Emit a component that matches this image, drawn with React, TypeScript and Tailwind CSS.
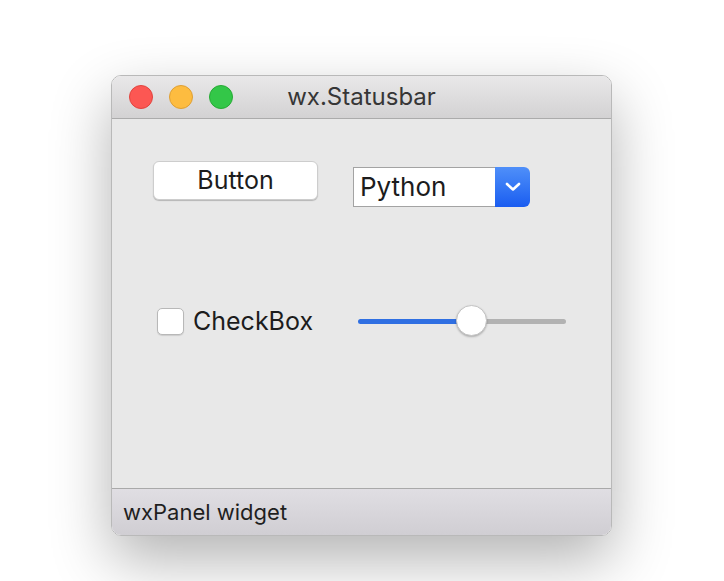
import { type ReactElement } from 'react'

function TrafficLights (): ReactElement {
  return (
    <div className="flex w-[121px] items-center gap-[16px] pl-[17px]">
      <span className="h-[24px] w-[24px] rounded-full border border-[#e0443e] bg-[#fc5753]" />
      <span className="h-[24px] w-[24px] rounded-full border border-[#de9f34] bg-[#fdbc40]" />
      <span className="h-[24px] w-[24px] rounded-full border border-[#27aa35] bg-[#33c748]" />
    </div>
  )
}

function Choice (): ReactElement {
  return (
    <div className="mt-[6px] flex h-[40px] w-[177px]">
      <div className="flex flex-1 items-center border border-r-0 border-[#a3a3a3] bg-white pl-[6px] text-[26px] leading-none text-[#1c1c1c]">
        Python
      </div>
      <div className="flex w-[35px] items-center justify-center rounded-r-[6px] bg-gradient-to-b from-[#4f8ff9] to-[#1a5cf0]">
        <svg width="16" height="10" viewBox="0 0 16 10" fill="none">
          <path d="M2 2 L8 7.5 L14 2" stroke="white" strokeWidth="2.6" strokeLinecap="round" strokeLinejoin="round" />
        </svg>
      </div>
    </div>
  )
}

function Slider (): ReactElement {
  return (
    <div className="relative ml-[45px] flex h-[36px] w-[208px] items-center">
      <div className="flex h-[5px] w-full overflow-hidden rounded-full">
        <div className="w-[113px] bg-[#2f6fe2]" />
        <div className="flex-1 bg-[#b2b2b2]" />
      </div>
      <span className="absolute left-[98px] top-[2px] h-[31px] w-[31px] rounded-full border border-[#c4c4c4] bg-white shadow-[0_1px_2px_rgba(0,0,0,0.25)]" />
    </div>
  )
}

export default function App (): ReactElement {
  return (
    <div className="h-[581px] w-[724px] bg-white pl-[111px] pt-[75px] font-['Inter','Liberation_Sans',sans-serif]">
      <div className="flex h-[461px] w-[501px] flex-col overflow-hidden rounded-[10px] border border-[#b9b9b9] shadow-[0_24px_60px_rgba(0,0,0,0.3)]">
        <div className="flex h-[43px] items-center border-b border-[#ababab] bg-gradient-to-b from-[#e9e8e9] to-[#d3d2d3]">
          <TrafficLights />
          <div className="flex-1 text-center text-[24px] leading-none text-[#363636]">wx.Statusbar</div>
          <div className="w-[121px]" />
        </div>

        <div className="flex flex-1 flex-col bg-[#e8e8e8] pt-[42px]">
          <div className="flex h-[46px] items-start pl-[41px]">
            <button className="flex h-[39px] w-[165px] items-center justify-center rounded-[6px] border border-[#cdcdcd] bg-white text-[25px] leading-none text-[#1c1c1c] shadow-[0_1px_1px_rgba(0,0,0,0.22)]">
              Button
            </button>
            <div className="ml-[35px]">
              <Choice />
            </div>
          </div>

          <div className="mt-[96px] flex h-[36px] items-center pl-[45px]">
            <span className="h-[27px] w-[27px] rounded-[5px] border border-[#b8b8b8] bg-white shadow-[0_1px_1px_rgba(0,0,0,0.12)]" />
            <span className="ml-[9px] text-[25px] leading-none text-[#1c1c1c]">CheckBox</span>
            <Slider />
          </div>
        </div>

        <div className="flex h-[47px] items-center border-t border-[#a9a9a9] bg-gradient-to-b from-[#e0dee3] to-[#d0ced3] pl-[11px] text-[22px] leading-none text-[#1f1f1f]">
          wxPanel widget
        </div>
      </div>
    </div>
  )
}
